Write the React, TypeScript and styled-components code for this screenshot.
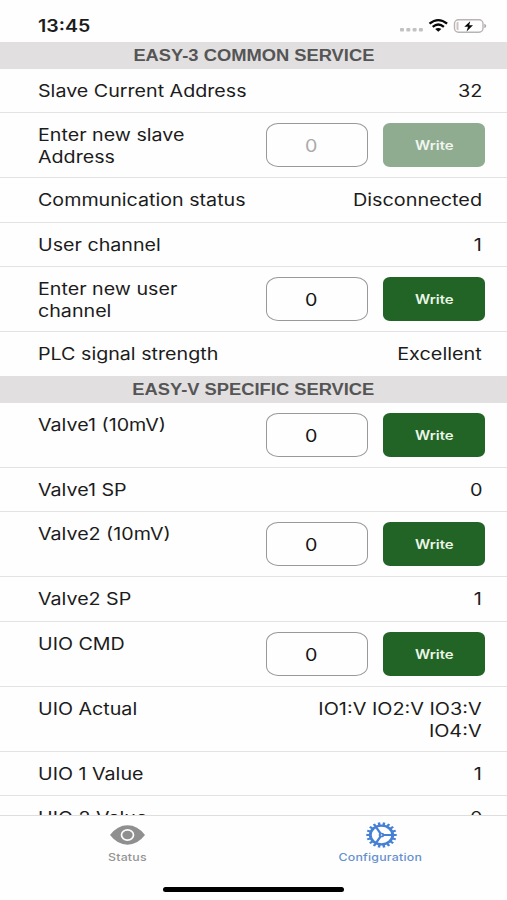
import React from "react";
import styled, { createGlobalStyle } from "styled-components";

const GlobalStyle = createGlobalStyle`
  * { box-sizing: border-box; }
  body { margin: 0; background: #fefefe; }
`;

const Screen = styled.div`
  width: 507px;
  height: 900px;
  display: flex;
  flex-direction: column;
  overflow: hidden;
  background: #fefefe;
  color: #1c1c1c;
  font-family: Inter, "Liberation Sans", sans-serif;
`;

const Stretch = styled.span<{ $x?: number; $origin?: string }>`
  display: inline-block;
  white-space: pre;
  transform: scaleX(${(p) => p.$x ?? 1.185});
  transform-origin: ${(p) => p.$origin ?? "center"} center;
`;

const StatusBar = styled.header`
  flex: none;
  height: 42px;
  padding: 10px 20px 0 38px;
  display: flex;
  justify-content: space-between;
  align-items: center;
`;

const Clock = styled.time`
  font-size: 17px;
  line-height: 30px;
  font-weight: 600;
`;

const Indicators = styled.div`
  display: flex;
  align-items: center;
`;

const Content = styled.main`
  flex: 1;
  min-height: 0;
  overflow: hidden;
`;

const SectionTitle = styled.h2`
  margin: 0;
  height: 27px;
  background: #e1dfe0;
  color: #555;
  display: flex;
  align-items: center;
  justify-content: center;
  font: 700 15.8px/25px "Liberation Sans", Arial, sans-serif;
`;

const Row = styled.div<{ $h: number; $last?: boolean }>`
  height: ${(p) => p.$h}px;
  padding: 11px 22px 0 38px;
  display: flex;
  justify-content: space-between;
  align-items: flex-start;
  border-bottom: ${(p) => (p.$last ? "0" : "1px solid #e2e2e2")};
  font-size: 16.6px;
  line-height: 22px;
`;

const Value = styled.div`
  padding-right: 3px;
  text-align: right;
`;

const Controls = styled.div`
  display: flex;
  gap: 15px;
  margin-top: -1px;
`;

const Field = styled.div<{ $muted?: boolean }>`
  width: 102px;
  height: 44px;
  padding: 2px 12px 0 0;
  display: flex;
  align-items: center;
  justify-content: center;
  border: 1px solid #999;
  border-radius: 12px / 10px;
  color: ${(p) => (p.$muted ? "#aaa" : "#151515")};
`;

const WriteButton = styled.button<{ $muted?: boolean }>`
  width: 102px;
  height: 44px;
  padding: 1px 0 0;
  border: 0;
  border-radius: 7px / 6px;
  background: ${(p) => (p.$muted ? "#8fac90" : "#226326")};
  color: ${(p) => (p.$muted ? "#f0f6ef" : "#e9f6e5")};
  font: 600 12.6px/20px Inter, sans-serif;
`;

const TabBar = styled.nav`
  flex: none;
  height: 85px;
  display: grid;
  grid-template-columns: 1fr 1fr;
  grid-template-rows: 54px 1fr;
  border-top: 1px solid #dedede;
`;

const Tab = styled.div<{ $active?: boolean }>`
  display: flex;
  flex-direction: column;
  align-items: center;
  padding-top: 3px;
  color: ${(p) => (p.$active ? "#4580d5" : "#8f8f8f")};
  font-size: 10.4px;
  line-height: 14px;
  font-weight: 500;
`;

const TabIcon = styled.div`
  height: 31px;
  display: flex;
  align-items: center;
  padding-left: 2px;
`;

const TabLabel = styled.div<{ $active?: boolean }>`
  margin-top: 1px;
  padding-left: 1px;
  letter-spacing: 0.2px;
  color: ${(p) => (p.$active ? "#6590ce" : "#949494")};
`;

const HomeIndicator = styled.div`
  grid-column: 1 / -1;
  justify-self: center;
  width: 181px;
  height: 5px;
  margin-top: 17px;
  border-radius: 3px;
  background: #000;
`;

type Item = {
  label: string;
  h: number;
  value?: string;
  input?: string;
  muted?: boolean;
  last?: boolean;
};

const common: Item[] = [
  { label: "Slave Current Address", value: "32", h: 44 },
  { label: "Enter new slave\nAddress", input: "0", muted: true, h: 65 },
  { label: "Communication status", value: "Disconnected", h: 45 },
  { label: "User channel", value: "1", h: 44 },
  { label: "Enter new user\nchannel", input: "0", h: 65 },
  { label: "PLC signal strength", value: "Excellent", h: 44, last: true },
];

const specific: Item[] = [
  { label: "Valve1 (10mV)", input: "0", h: 65 },
  { label: "Valve1 SP", value: "0", h: 44 },
  { label: "Valve2 (10mV)", input: "0", h: 65 },
  { label: "Valve2 SP", value: "1", h: 45 },
  { label: "UIO CMD", input: "0", h: 65 },
  { label: "UIO Actual", value: "IO1:V IO2:V IO3:V\nIO4:V", h: 65 },
  { label: "UIO 1 Value", value: "1", h: 44 },
  { label: "UIO 2 Value", value: "0", h: 44 },
];

const ServiceRow = ({ item }: { item: Item }) => (
  <Row $h={item.h} $last={item.last}>
    <Stretch $origin="left">{item.label}</Stretch>
    {item.input !== undefined ? (
      <Controls>
        <Field $muted={item.muted}>
          <Stretch>{item.input}</Stretch>
        </Field>
        <WriteButton $muted={item.muted}>
          <Stretch>Write</Stretch>
        </WriteButton>
      </Controls>
    ) : (
      <Value>
        <Stretch $x={1.195} $origin="right">{item.value}</Stretch>
      </Value>
    )}
  </Row>
);

const StatusIcons = () => (
  <Indicators>
    <svg width="88" height="18" viewBox="0 0 88 18">
      <g fill="#c2c2c2">
        <rect x="1" y="11" width="4" height="3.5" rx="1" />
        <rect x="7.3" y="11" width="4" height="3.5" rx="1" />
        <rect x="13.6" y="11" width="4" height="3.5" rx="1" />
        <rect x="19.9" y="11" width="4" height="3.5" rx="1" />
      </g>
      <g fill="none" stroke="#080808" strokeWidth="2.3">
        <path d="M30.5 6.7Q39.3-.5 48.1 6.7" />
        <path d="M33.7 9.8Q39.3 5.3 44.9 9.8" />
      </g>
      <path d="M36.2 12.1Q39.3 9.7 42.4 12.1L39.3 14.7Z" fill="#080808" />
      <rect x="55.5" y="2.8" width="28.5" height="12.5" rx="4" fill="none" stroke="#b9b3b3" strokeWidth="1.4" />
      <path d="M57.5 6Q57.5 4.8 59.5 4.8V13.3Q57.5 13.3 57.5 12.1Z" fill="#cfc1c1" />
      <path d="M85.3 6.8V11.3Q87.3 10.3 87.3 9Q87.3 7.8 85.3 6.8Z" fill="#aaa" />
      <path d="M71.2 4.2L65.3 9.8H69L67.6 14.4L74 8.3H70.2Z" fill="#080808" />
    </svg>
  </Indicators>
);

const EyeIcon = () => (
  <svg width="35" height="20" viewBox="0 0 35 20">
    <path d="M0 10Q7.5.3 17.5.3T35 10Q27.5 19.7 17.5 19.7T0 10Z" fill="currentColor" />
    <ellipse cx="17.5" cy="10" rx="6" ry="5.1" fill="none" stroke="#fefefe" strokeWidth="1.7" />
  </svg>
);

const teeth = Array.from({ length: 18 }, (_, i) => i * 20);

const GearIcon = () => (
  <svg width="31" height="26" viewBox="-15.5 -15.5 31 31" preserveAspectRatio="none">
    <g fill="none" stroke="currentColor">
      <circle r="11.2" strokeWidth="2.9" />
      <circle r="1.8" strokeWidth="2" />
      <path d="M2 0H11M-1-1.7L-5.5-9.5M-1 1.7L-5.5 9.5" strokeWidth="2.4" />
      {teeth.map((angle) => (
        <path key={angle} d="M12 0H15.2" strokeWidth="2.5" transform={`rotate(${angle})`} />
      ))}
    </g>
  </svg>
);

export default function App() {
  return (
    <>
      <GlobalStyle />
      <Screen>
        <StatusBar>
          <Clock>
            <Stretch $x={1.15} $origin="left">13:45</Stretch>
          </Clock>
          <StatusIcons />
        </StatusBar>
        <Content>
          <SectionTitle>
            <Stretch $x={1.16}>EASY-3 COMMON SERVICE</Stretch>
          </SectionTitle>
          {common.map((item) => (
            <ServiceRow key={item.label} item={item} />
          ))}
          <SectionTitle>
            <Stretch $x={1.16}>EASY-V SPECIFIC SERVICE</Stretch>
          </SectionTitle>
          {specific.map((item) => (
            <ServiceRow key={item.label} item={item} />
          ))}
        </Content>
        <TabBar>
          <Tab>
            <TabIcon>
              <EyeIcon />
            </TabIcon>
            <TabLabel>
              <Stretch>Status</Stretch>
            </TabLabel>
          </Tab>
          <Tab $active>
            <TabIcon>
              <GearIcon />
            </TabIcon>
            <TabLabel $active>
              <Stretch>Configuration</Stretch>
            </TabLabel>
          </Tab>
          <HomeIndicator />
        </TabBar>
      </Screen>
    </>
  );
}
